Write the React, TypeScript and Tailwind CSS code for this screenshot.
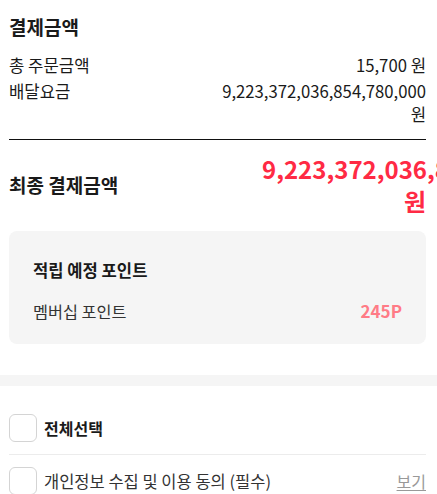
const font = { fontFamily: '"Noto Sans CJK KR", "Noto Sans", sans-serif' };

function Checkbox() {
  return <span className="h-7 w-7 shrink-0 rounded-md border border-[#d4d4d4] bg-white" />;
}

export default function App() {
  return (
    <div className="min-h-screen overflow-x-hidden bg-white text-[#1a1a1a]" style={font}>
      <section className="pl-[9px] pr-[11px] pt-[12px]">
        <h2 className="text-[19px] font-bold leading-[30px]">결제금액</h2>

        <div className="mt-[12px] flex flex-col gap-[3px] text-[16.7px] leading-[23px]">
          <div className="flex justify-between">
            <span>총 주문금액</span>
            <span className="text-right">15,700 원</span>
          </div>
          <div className="flex justify-between">
            <span>배달요금</span>
            <span className="max-w-[50%] text-right">9,223,372,036,854,780,000 원</span>
          </div>
        </div>

        <div className="mt-[13px] h-px bg-[#111]" />

        <div className="mt-[13px] flex items-center justify-between">
          <span className="text-[19px] font-bold">최종 결제금액</span>
          <div className="w-[164px] shrink-0 text-right text-[24px] font-bold leading-[32px] text-[#ff2a44]">
            9,223,372,036,854,780,000 원
          </div>
        </div>

        <div className="mt-[14px] rounded-lg bg-[#f5f5f5] px-6 pt-[26px] pb-[20px]">
          <h3 className="text-[16.6px] font-bold leading-[26px]">적립 예정 포인트</h3>
          <div className="mt-[15px] flex items-center justify-between text-[16.3px] leading-[26px]">
            <span className="text-[#333]">멤버십 포인트</span>
            <span className="text-[17px] font-bold text-[#ff7b86]">245P</span>
          </div>
        </div>
      </section>

      <div className="mt-[31px] h-[11px] bg-[#f5f5f5]" />

      <section className="pl-[9px] pr-[11px] pt-[28px]">
        <label className="flex items-center gap-[7px] pb-[12px]">
          <Checkbox />
          <span className="text-[16px] font-bold">전체선택</span>
        </label>
        <div className="h-px bg-[#ececec]" />
        <div className="flex items-center justify-between pt-[12px]">
          <label className="flex items-center gap-[7px]">
            <Checkbox />
            <span className="text-[16.5px] text-[#333]">개인정보 수집 및 이용 동의 (필수)</span>
          </label>
          <span className="text-[16px] text-[#999] underline underline-offset-2">보기</span>
        </div>
      </section>
    </div>
  );
}
